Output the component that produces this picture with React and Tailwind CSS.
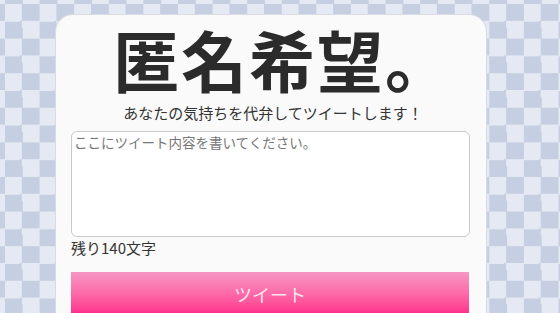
export default function App() {
  return (
    <div
      className="w-[560px] h-[313px] overflow-hidden bg-[#e4e9f3] pl-[55px] pt-[14px]"
      style={{
        backgroundImage:
          'conic-gradient(#c6cfe1 0 25%, transparent 0 50%, #c6cfe1 0 75%, transparent 0)',
        backgroundSize: '34.6px 34.6px',
        backgroundPosition: '5px 4px',
        fontFamily: '"Noto Sans CJK JP", "Noto Sans", sans-serif',
      }}
    >
      <div className="w-[432px] h-[320px] rounded-[18px] bg-[#fafafa] border border-[#d8dbe2] px-[15px] pt-[10px]">
        <h1 className="text-[66px] leading-[66px] font-bold text-[#2b2b2b] text-center tracking-[2px] pl-[24px]">
          匿名希望。
        </h1>
        <p className="text-[15px] leading-[18px] text-[#333] text-center mt-[13px] pl-[4px]">
          あなたの気持ちを代弁してツイートします！
        </p>
        <textarea
          className="block w-[399px] h-[106px] mt-[9px] rounded-[6px] border border-[#c8c8c8] bg-white px-[2px] py-[1px] text-[13.5px] leading-[18px] text-[#333] placeholder:text-[#777] resize-none outline-none"
          placeholder="ここにツイート内容を書いてください。"
        />
        <div className="text-[15px] leading-[20px] text-[#333] mt-[1px]">残り140文字</div>
        <button
          className="block w-[398px] h-[44px] mt-[14px] text-[18px] text-[#fbe3ef] bg-gradient-to-b from-[#f596c4] to-[#ff1f8a]"
        >
          ツイート
        </button>
      </div>
    </div>
  );
}
